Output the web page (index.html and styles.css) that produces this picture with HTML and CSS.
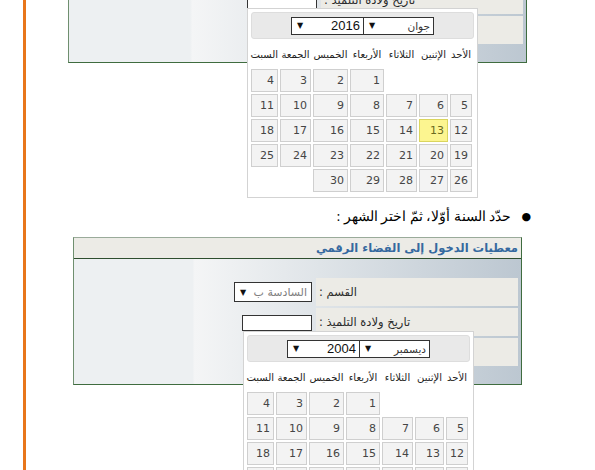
FILE: index.html
```html
<!DOCTYPE html>
<html lang="ar">
<head>
<meta charset="utf-8">
<title>معطيات الدخول</title>
<link rel="stylesheet" href="styles.css">
</head>
<body>
<div class="page">
  <section class="panel panel-top">
    <div class="panel-title">معطيات الدخول إلى الفضاء الرقمي</div>
    <div class="panel-body">
      <table class="form">
        <tr><td class="label">القسم :</td><td class="value"><span class="select"><span>السادسة ب</span><span class="arrow">▼</span></span></td></tr>
        <tr><td class="label">تاريخ ولادة التلميذ :</td><td class="value"><span class="input"></span></td></tr>
        <tr><td class="label"></td><td class="value"></td></tr>
      </table>
    </div>
  </section>

  <p class="note"><span class="dot">●</span><span>حدّد السنة أوّلا، ثمّ اختر الشهر :</span></p>

  <section class="panel panel-bottom">
    <div class="panel-title">معطيات الدخول إلى الفضاء الرقمي</div>
    <div class="panel-body">
      <table class="form">
        <tr><td class="label">القسم :</td><td class="value"><span class="select"><span>السادسة ب</span><span class="arrow">▼</span></span></td></tr>
        <tr><td class="label">تاريخ ولادة التلميذ :</td><td class="value"><span class="input"></span></td></tr>
        <tr><td class="label"></td><td class="value"></td></tr>
      </table>
    </div>
  </section>

  <div class="datepicker dp-top">
    <div class="dp-header">
      <span class="dp-select dp-month"><span class="small">جوان</span><span class="arrow">▼</span></span>
      <span class="dp-select dp-year"><span>2016</span><span class="arrow">▼</span></span>
    </div>
    <table class="dp-cal">
      <colgroup><col class="c1"><col class="c2"><col class="c3"><col class="c4"><col class="c5"><col class="c6"><col class="c7"></colgroup>
      <thead><tr><th>الأحد</th><th>الإثنين</th><th>الثلاثاء</th><th>الأربعاء</th><th>الخميس</th><th>الجمعة</th><th>السبت</th></tr></thead>
      <tbody>
        <tr><td></td><td></td><td></td><td><span class="d">1</span></td><td><span class="d">2</span></td><td><span class="d">3</span></td><td><span class="d">4</span></td></tr>
        <tr><td><span class="d">5</span></td><td><span class="d">6</span></td><td><span class="d">7</span></td><td><span class="d">8</span></td><td><span class="d">9</span></td><td><span class="d">10</span></td><td><span class="d">11</span></td></tr>
        <tr><td><span class="d">12</span></td><td><span class="d today">13</span></td><td><span class="d">14</span></td><td><span class="d">15</span></td><td><span class="d">16</span></td><td><span class="d">17</span></td><td><span class="d">18</span></td></tr>
        <tr><td><span class="d">19</span></td><td><span class="d">20</span></td><td><span class="d">21</span></td><td><span class="d">22</span></td><td><span class="d">23</span></td><td><span class="d">24</span></td><td><span class="d">25</span></td></tr>
        <tr><td><span class="d">26</span></td><td><span class="d">27</span></td><td><span class="d">28</span></td><td><span class="d">29</span></td><td><span class="d">30</span></td><td></td><td></td></tr>
      </tbody>
    </table>
  </div>

  <div class="datepicker dp-bottom">
    <div class="dp-header">
      <span class="dp-select dp-month"><span class="small">ديسمبر</span><span class="arrow">▼</span></span>
      <span class="dp-select dp-year"><span>2004</span><span class="arrow">▼</span></span>
    </div>
    <table class="dp-cal">
      <colgroup><col class="c1"><col class="c2"><col class="c3"><col class="c4"><col class="c5"><col class="c6"><col class="c7"></colgroup>
      <thead><tr><th>الأحد</th><th>الإثنين</th><th>الثلاثاء</th><th>الأربعاء</th><th>الخميس</th><th>الجمعة</th><th>السبت</th></tr></thead>
      <tbody>
        <tr><td></td><td></td><td></td><td><span class="d">1</span></td><td><span class="d">2</span></td><td><span class="d">3</span></td><td><span class="d">4</span></td></tr>
        <tr><td><span class="d">5</span></td><td><span class="d">6</span></td><td><span class="d">7</span></td><td><span class="d">8</span></td><td><span class="d">9</span></td><td><span class="d">10</span></td><td><span class="d">11</span></td></tr>
        <tr><td><span class="d">12</span></td><td><span class="d">13</span></td><td><span class="d">14</span></td><td><span class="d">15</span></td><td><span class="d">16</span></td><td><span class="d">17</span></td><td><span class="d">18</span></td></tr>
        <tr><td><span class="d">19</span></td><td><span class="d">20</span></td><td><span class="d">21</span></td><td><span class="d">22</span></td><td><span class="d">23</span></td><td><span class="d">24</span></td><td><span class="d">25</span></td></tr>
      </tbody>
    </table>
  </div>
</div>
</body>
</html>
```

FILE: styles.css
```css
html, body {
  margin: 0;
  padding: 0;
  background: #ffffff;
  overflow: hidden;
  height: 470px;
}

body {
  font-family: "DejaVu Sans", sans-serif;
  color: #222;
}

.page {
  display: flow-root;
  position: relative;
  overflow: hidden;
  margin-left: 23px;
  border-left: 3px solid #e8761b;
  height: 470px;
}

/* ---------- panels ---------- */
.panel {
  box-sizing: border-box;
  direction: rtl;
  border: 1px solid #3f6c3f;
  border-top-color: #9aab9a;
  border-left-color: #6f8f6f;
  background: linear-gradient(to right, #edf0f2 0%, #edf0f2 26.5%, #f4f5f6 27%, #dfe4e8 55%, #bcc7d1 100%);
}

.panel-top {
  margin-left: 42px;
  width: 459px;
  margin-top: -85px;
}

.panel-bottom {
  margin-left: 47px;
  width: 449px;
  margin-top: 10px;
}

.panel-title {
  height: 20px;
  line-height: 20px;
  padding-right: 3px;
  background: #ecebe6;
  border-bottom: 1px solid #2e4e2e;
  color: #35699f;
  font-weight: bold;
  font-size: 11.5px;
  white-space: nowrap;
}

.panel-body {
  padding: 17px 1px 16px;
}

.form {
  width: 100%;
  border-collapse: separate;
  border-spacing: 2px;
}

.form td {
  height: 28px;
  padding: 0;
  vertical-align: middle;
}

.form .label {
  box-sizing: border-box;
  width: 202px;
  padding: 0 3px;
  background: #ecebe6;
  text-align: left;
  font-size: 11.5px;
  color: #2a2a2a;
  white-space: nowrap;
}

.form .value {
  text-align: right;
  padding-right: 2px;
}

.select {
  display: inline-flex;
  box-sizing: border-box;
  width: 78px;
  height: 20px;
  vertical-align: middle;
  justify-content: space-between;
  align-items: center;
  padding: 0 4px 0 5px;
  border: 1px solid #333;
  background: #fff;
  color: #808080;
  font-size: 11px;
}

.arrow {
  font-size: 8px;
  color: #111;
  font-family: "DejaVu Sans", sans-serif;
}

.input {
  display: inline-block;
  box-sizing: border-box;
  width: 70px;
  height: 16px;
  vertical-align: middle;
  border: 1px solid #333;
  background: #fff;
}

/* ---------- note ---------- */
.note {
  display: flex;
  direction: rtl;
  align-items: center;
  gap: 10px;
  margin: 142px 0 0;
  padding-right: 64px;
  height: 22px;
  font-family: "Liberation Serif", "DejaVu Serif", serif;
  font-size: 14px;
  color: #000;
}

.dot {
  font-size: 11px;
  font-family: "DejaVu Sans", sans-serif;
}

/* ---------- datepicker ---------- */
.datepicker {
  position: absolute;
  box-sizing: border-box;
  width: 231px;
  direction: rtl;
  padding: 3px;
  border: 1px solid #d3d3d3;
  background: #fff;
}

.dp-top {
  left: 221px;
  top: 8px;
}

.dp-bottom {
  left: 217px;
  top: 331px;
}

.dp-header {
  box-sizing: border-box;
  height: 27px;
  display: flex;
  justify-content: center;
  align-items: center;
  background: #e9e9e9;
  border: 1px solid #dddddd;
  border-radius: 3px;
}

.dp-select {
  box-sizing: border-box;
  display: flex;
  justify-content: space-between;
  align-items: center;
  height: 18px;
  padding: 0 3px 0 5px;
  border: 1px solid #333;
  background: #fff;
  font-family: "Liberation Sans", "DejaVu Sans", sans-serif;
  font-size: 13px;
  color: #111;
}

.dp-month {
  width: 71px;
}

.dp-year {
  width: 73px;
  margin-right: -1px;
}

.small {
  font-family: "DejaVu Sans", sans-serif;
  font-size: 10.5px;
  color: #333;
}

.dp-cal {
  table-layout: fixed;
  width: 225px;
  border-collapse: separate;
  border-spacing: 2px;
}

.dp-cal .c1 { width: 22px; }
.dp-cal .c2 { width: 29px; }
.dp-cal .c3 { width: 31px; }
.dp-cal .c4 { width: 34px; }
.dp-cal .c5 { width: 35px; }
.dp-cal .c6 { width: 31px; }
.dp-cal .c7 { width: 27px; }

.dp-cal th {
  height: 26px;
  padding: 0;
  font-weight: normal;
  font-size: 10px;
  color: #222;
  white-space: nowrap;
  text-align: center;
}

.dp-cal td {
  padding: 0;
}

.d {
  display: block;
  height: 21px;
  line-height: 21px;
  padding: 0 3px;
  border: 1px solid #cfcfcf;
  background: #f3f3f3;
  color: #454545;
  font-size: 11px;
  text-align: right;
}

.d.today {
  background: #fcf590;
  border-color: #dad55e;
  color: #6a6a20;
}
```
